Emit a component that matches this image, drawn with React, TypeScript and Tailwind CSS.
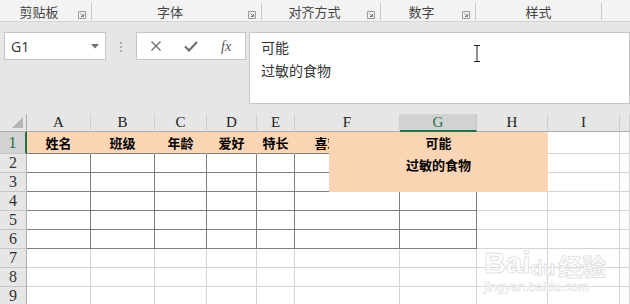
import type { ReactNode } from "react";

const CJK = "font-['Microsoft_YaHei','Noto_Sans_CJK_SC',sans-serif]";

const COLS = ["A", "B", "C", "D", "E", "F", "G", "H", "I", ""];

const ROW1: Record<number, string> = {
  0: "姓名",
  1: "班级",
  2: "年龄",
  3: "爱好",
  4: "特长",
  5: "喜欢的食物",
};

function RibbonGroup({
  label,
  launcher = true,
  className,
}: {
  label: string;
  launcher?: boolean;
  className: string;
}) {
  return (
    <div className={`flex h-[17px] items-center border-r border-[#c8c8c8] ${className}`}>
      <div className="flex-1 text-center text-[13px] leading-none text-[#444]">{label}</div>
      {launcher && (
        <svg width="8" height="8" viewBox="0 0 8 8" className="mr-[5px] mt-[6px]">
          <path d="M0.5 0.5h7v7h-7z" fill="none" stroke="#9a9a9a" />
          <path d="M2.5 2.5l3 3M5.5 3v2.5H3" fill="none" stroke="#7a7a7a" />
        </svg>
      )}
    </div>
  );
}

function Cell({ r, c }: { r: number; c: number }) {
  const inTable = c <= 6 && r <= 6;
  let cls = "border-r border-b border-[#d4d4d4] bg-white";
  let text: ReactNode = null;

  if (r === 1 && c <= 6) {
    cls = "border-r border-r-[#fcd5b4] border-b border-b-[#7f7f7f] bg-[#fcd5b4]";
    text = ROW1[c];
  } else if (inTable) {
    cls = "border-r border-b border-[#7f7f7f] bg-white";
  }

  return (
    <div className={`flex items-center justify-center overflow-hidden whitespace-nowrap text-[13px] font-bold text-black ${cls}`}>
      {text}
    </div>
  );
}

export default function App() {
  return (
    <div className={`h-[304px] w-[630px] overflow-hidden bg-[#e6e6e6] ${CJK}`}>

      {/* RIBBON GROUP LABELS */}
      <div className="flex h-[22px] items-start border-b border-[#d5d5d5] bg-[#f3f3f3] pt-[3px]">
        <RibbonGroup label="剪贴板" className="w-[92px]" />
        <RibbonGroup label="字体" className="w-[170px]" />
        <RibbonGroup label="对齐方式" className="w-[119px]" />
        <RibbonGroup label="数字" className="w-[95px]" />
        <RibbonGroup label="样式" launcher={false} className="w-[126px]" />
      </div>

      {/* FORMULA BAR */}
      <div className="flex h-[92px] items-start gap-0 pl-[4px] pt-[10px]">
        <div className="flex h-[28px] w-[102px] items-center justify-between border border-[#c6c6c6] bg-white pl-[6px] pr-[6px]">
          <span className="font-['Segoe_UI','Open_Sans',sans-serif] text-[14px] text-[#333]">G1</span>
          <svg width="8" height="5" viewBox="0 0 8 5">
            <path d="M0 0h8L4 4.5z" fill="#6f6f6f" />
          </svg>
        </div>

        <div className="flex w-[30px] flex-col items-center gap-[2px] pt-[10px]">
          <span className="h-[2px] w-[2px] bg-[#b0b0b0]" />
          <span className="h-[2px] w-[2px] bg-[#b0b0b0]" />
          <span className="h-[2px] w-[2px] bg-[#b0b0b0]" />
        </div>

        <div className="flex h-[28px] w-[110px] items-center border border-[#c6c6c6] bg-white">
          <svg width="12" height="12" viewBox="0 0 12 12" className="ml-[13px]">
            <path d="M1.5 1.5l9 9M10.5 1.5l-9 9" stroke="#6f6f6f" strokeWidth="1.4" />
          </svg>
          <svg width="14" height="12" viewBox="0 0 14 12" className="ml-[22px]">
            <path d="M1 6.5l4 4L13 2" fill="none" stroke="#6f6f6f" strokeWidth="2.2" />
          </svg>
          <span className="ml-[23px] font-['Liberation_Serif',serif] text-[14px] italic text-[#555]">fx</span>
        </div>

        <div className="relative ml-[3px] h-[72px] flex-1 border border-[#c6c6c6] bg-white pl-[11px] pt-[3px] text-[14px] leading-[23px] text-[#333]">
          <div>可能</div>
          <div>过敏的食物</div>

          {/* I-BEAM CURSOR */}
          <svg width="8" height="17" viewBox="0 0 8 17" className="absolute left-[223px] top-[12px]">
            <path d="M1 0.5h6M1 16.5h6M4 0.5v16" fill="none" stroke="#222" strokeWidth="1" />
          </svg>
        </div>
      </div>

      {/* GRID */}
      <div className="relative grid grid-cols-[27px_64px_64px_52px_50px_38px_105px_77px_71px_72px_10px] grid-rows-[18px_22px_repeat(9,19px)]">

        {/* CORNER */}
        <div className="flex items-end justify-end border-r border-b border-[#ababab] bg-[#e6e6e6] pb-[3px] pr-[3px]">
          <svg width="11" height="11" viewBox="0 0 11 11">
            <path d="M11 0v11H0z" fill="#b5b5b5" />
          </svg>
        </div>

        {/* COLUMN HEADERS */}
        {COLS.map((k, c) => (
          <div
            key={`h${c}`}
            className={
              k === "G"
                ? "flex items-center justify-center border-r border-[#c6c6c6] border-b-2 border-b-[#217346] bg-[#d2d2d2] font-['Liberation_Serif',serif] text-[15px] text-[#217346]"
                : "flex items-center justify-center border-r border-b border-r-[#d0d0d0] border-b-[#ababab] bg-[#e6e6e6] font-['Liberation_Serif',serif] text-[15px] text-[#222]"
            }
          >
            {k}
          </div>
        ))}

        {/* ROWS */}
        {Array.from({
          length: 9,
        }).map((_, i) => {
          const r = i + 1;

          return [
            <div
              key={`r${r}`}
              className={
                r === 1
                  ? "flex items-center justify-center border-r-2 border-b border-r-[#217346] border-b-[#c6c6c6] bg-[#d2d2d2] font-['Liberation_Serif',serif] text-[16px] text-[#217346]"
                  : "flex items-center justify-center border-r border-b border-r-[#ababab] border-b-[#c6c6c6] bg-[#e6e6e6] font-['Liberation_Serif',serif] text-[16px] text-[#333]"
              }
            >
              {r}
            </div>,

            ...COLS.map((_, c) => <Cell key={`c${r}-${c}`} r={r} c={c} />),
          ];
        })}

        {/* IN-CELL EDIT BOX (G1) */}
        <div className="absolute left-[329px] top-[18px] z-10 flex h-[60px] w-[219px] flex-col items-center bg-[#fcd5b4] text-[13px] font-bold leading-[22px] text-black">
          <div>可能</div>
          <div>过敏的食物</div>
        </div>

        {/* WATERMARK */}
        <div className="pointer-events-none absolute left-[484px] top-[134px] z-10 flex flex-col items-start">
          <div className="flex items-end leading-none">
            <span className="font-['Liberation_Sans',sans-serif] text-[30px] font-bold text-white [-webkit-text-stroke:1px_#e2e2e2]">Bai</span>
            <span className="font-['Liberation_Sans',sans-serif] text-[20px] font-bold text-white [-webkit-text-stroke:1px_#e2e2e2]">du</span>
            <span className="ml-[3px] text-[24px] font-bold text-white [-webkit-text-stroke:1px_#e2e2e2]">经验</span>
          </div>
          <div className="mt-[2px] font-['Liberation_Sans',sans-serif] text-[13px] leading-none text-white [-webkit-text-stroke:0.5px_#e0e0e0]">
            jingyan.baidu.com
          </div>
        </div>
      </div>
    </div>
  );
}
